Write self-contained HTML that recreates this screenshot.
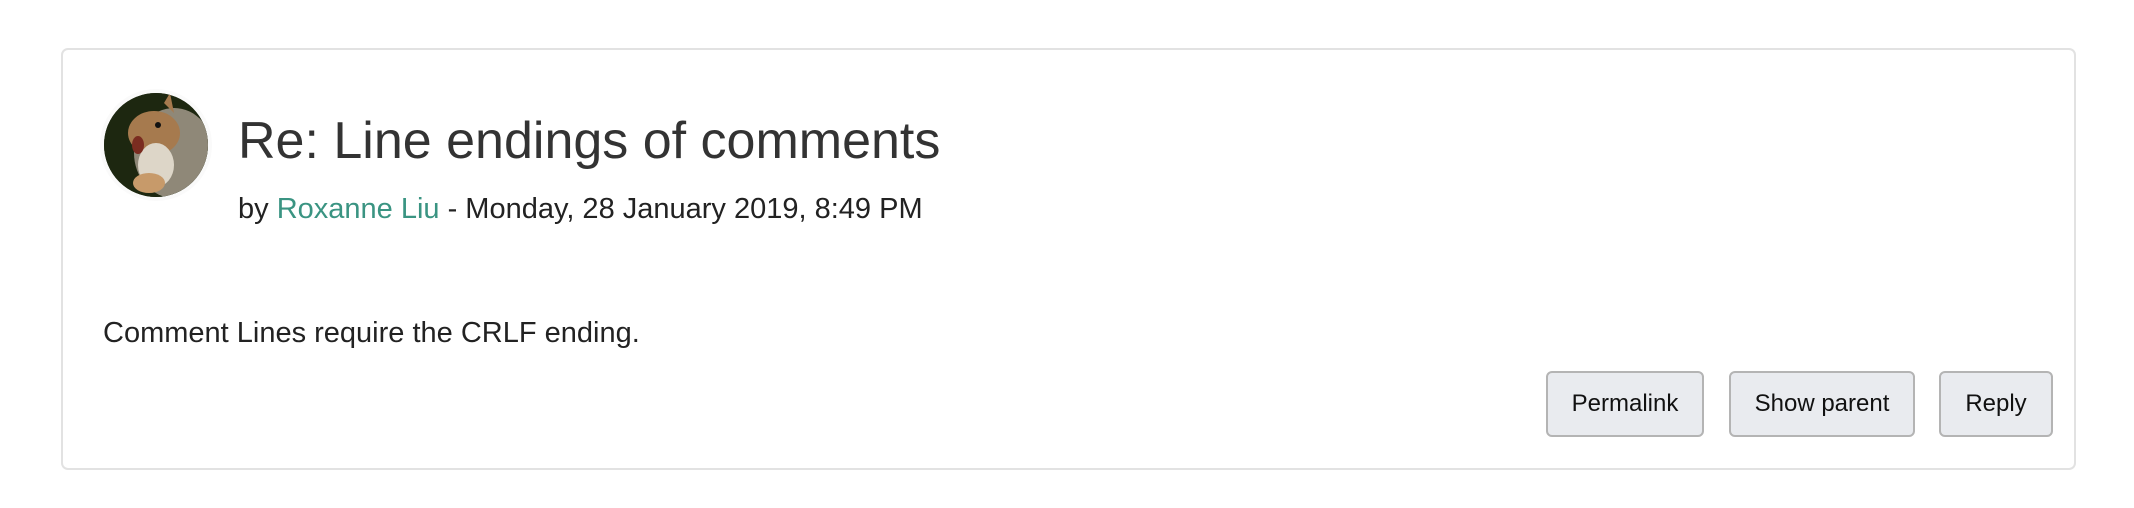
<!DOCTYPE html>
<html><head><style>
body{margin:0;width:2134px;height:508px;background:#fff;font-family:"Liberation Sans",Arial,sans-serif;color:#333;position:relative;overflow:hidden}
.card{position:absolute;left:61px;top:48px;width:2015px;height:422px;border:2px solid #e2e2e2;border-radius:7px;box-sizing:border-box}
.av{position:absolute;left:104px;top:93px;width:104px;height:104px;border-radius:50%;overflow:hidden;background:#1f2a12;box-shadow:0 0 0 4px #fafafa}
.t{position:absolute;left:238px;top:111px;font-size:52px;line-height:60px;white-space:nowrap;color:#333}
.by{position:absolute;left:238px;top:193px;font-size:29px;line-height:32px;white-space:nowrap;color:#222}
.by a{color:#3a9482;text-decoration:none}
.c{position:absolute;left:103px;top:317px;font-size:29px;line-height:32px;white-space:nowrap;color:#222}
.b{position:absolute;top:371px;height:66px;box-sizing:border-box;border:2px solid #b4b4b4;border-radius:6px;background:#e9ebef;font-size:24px;color:#111;display:flex;align-items:center;justify-content:center}
</style></head><body>
<div class="card"></div>
<div class="av"><svg width="104" height="104" viewBox="0 0 104 104">
<rect width="104" height="104" fill="#1d2710"/>
<ellipse cx="70" cy="60" rx="40" ry="45" fill="#8f8878"/>
<ellipse cx="50" cy="40" rx="26" ry="22" fill="#a67a4e"/>
<path d="M60 10 L66 0 L70 20 Z" fill="#a67a4e"/>
<ellipse cx="52" cy="72" rx="18" ry="22" fill="#ddd6c8"/>
<ellipse cx="34" cy="52" rx="6" ry="9" fill="#7a2c20"/>
<circle cx="54" cy="32" r="3" fill="#111"/>
<ellipse cx="45" cy="90" rx="16" ry="10" fill="#c79a6a"/>
</svg></div>
<div class="t">Re: Line endings of comments</div>
<div class="by">by <a>Roxanne Liu</a> - Monday, 28 January 2019, 8:49 PM</div>
<div class="c">Comment Lines require the CRLF ending.</div>
<div class="b" style="left:1546px;width:158px">Permalink</div>
<div class="b" style="left:1729px;width:186px">Show parent</div>
<div class="b" style="left:1939px;width:114px">Reply</div>
</body></html>
